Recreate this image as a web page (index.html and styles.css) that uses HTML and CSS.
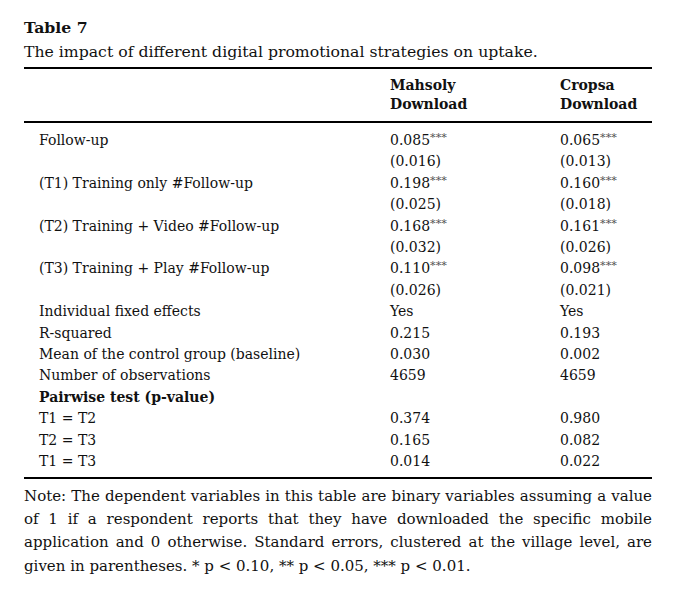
FILE: index.html
```html
<!DOCTYPE html>
<html>
<head>
<meta charset="utf-8">
<link rel="stylesheet" href="styles.css">
</head>
<body>
<div class="wrap">
  <div class="caption">
    <div class="label">Table 7</div>
    <div class="title">The impact of different digital promotional strategies on uptake.</div>
  </div>
  <table class="tbl">
    <colgroup><col class="c1"><col class="c2"><col class="c3"></colgroup>
    <thead>
      <tr><th></th><th>Mahsoly<br>Download</th><th>Cropsa<br>Download</th></tr>
    </thead>
    <tbody>
      <tr class="first"><td>Follow-up</td><td>0.085<sup>***</sup></td><td>0.065<sup>***</sup></td></tr>
      <tr><td></td><td>(0.016)</td><td>(0.013)</td></tr>
      <tr><td>(T1) Training only #Follow-up</td><td>0.198<sup>***</sup></td><td>0.160<sup>***</sup></td></tr>
      <tr><td></td><td>(0.025)</td><td>(0.018)</td></tr>
      <tr><td>(T2) Training + Video #Follow-up</td><td>0.168<sup>***</sup></td><td>0.161<sup>***</sup></td></tr>
      <tr><td></td><td>(0.032)</td><td>(0.026)</td></tr>
      <tr><td>(T3) Training + Play #Follow-up</td><td>0.110<sup>***</sup></td><td>0.098<sup>***</sup></td></tr>
      <tr><td></td><td>(0.026)</td><td>(0.021)</td></tr>
      <tr><td>Individual fixed effects</td><td>Yes</td><td>Yes</td></tr>
      <tr><td>R-squared</td><td>0.215</td><td>0.193</td></tr>
      <tr><td>Mean of the control group (baseline)</td><td>0.030</td><td>0.002</td></tr>
      <tr><td>Number of observations</td><td>4659</td><td>4659</td></tr>
      <tr><td class="b">Pairwise test (p-value)</td><td></td><td></td></tr>
      <tr><td>T1 = T2</td><td>0.374</td><td>0.980</td></tr>
      <tr><td>T2 = T3</td><td>0.165</td><td>0.082</td></tr>
      <tr class="last"><td>T1 = T3</td><td>0.014</td><td>0.022</td></tr>
    </tbody>
  </table>
  <p class="note">Note: The dependent variables in this table are binary variables assuming a value of 1 if a respondent reports that they have downloaded the specific mobile application and 0 otherwise. Standard errors, clustered at the village level, are given in parentheses. * p &lt; 0.10, ** p &lt; 0.05, *** p &lt; 0.01.</p>
</div>
</body>
</html>
```

FILE: styles.css
```css
html, body {
  margin: 0;
  padding: 0;
  background: #ffffff;
}
body {
  color: #111;
  font-family: "DejaVu Serif", serif;
}
.wrap {
  width: 628px;
  padding: 17px 0 0 24px;
}
.label {
  font-weight: bold;
  font-size: 15.7px;
  line-height: 22px;
}
.title {
  font-size: 15.7px;
  line-height: 25px;
}
.tbl {
  width: 628px;
  border-collapse: collapse;
  margin-top: 3px;
  border-top: 2px solid #000;
  border-bottom: 2px solid #000;
  font-size: 14px;
}
.c1 { width: 366px; }
.c2 { width: 170px; }
.c3 { width: 92px; }
.tbl th {
  text-align: left;
  font-weight: bold;
  line-height: 18.5px;
  padding: 7px 0 8px 0;
  border-bottom: 2px solid #000;
  vertical-align: top;
}
.tbl td {
  padding: 0;
  line-height: 21.4px;
  height: 21.4px;
  vertical-align: middle;
  white-space: nowrap;
}
.tbl td:first-child { padding-left: 15px; }
.tbl tr.first td { padding-top: 7px; }
.tbl tr.last td { padding-bottom: 4px; }
.tbl .b { font-weight: bold; }
.tbl sup {
  font-size: 0.8em;
  vertical-align: 0.35em;
  line-height: 0;
  color: #555;
}
.note {
  margin: 6px 0 0 0;
  font-size: 15px;
  line-height: 23.4px;
  text-align: justify;
}
```
